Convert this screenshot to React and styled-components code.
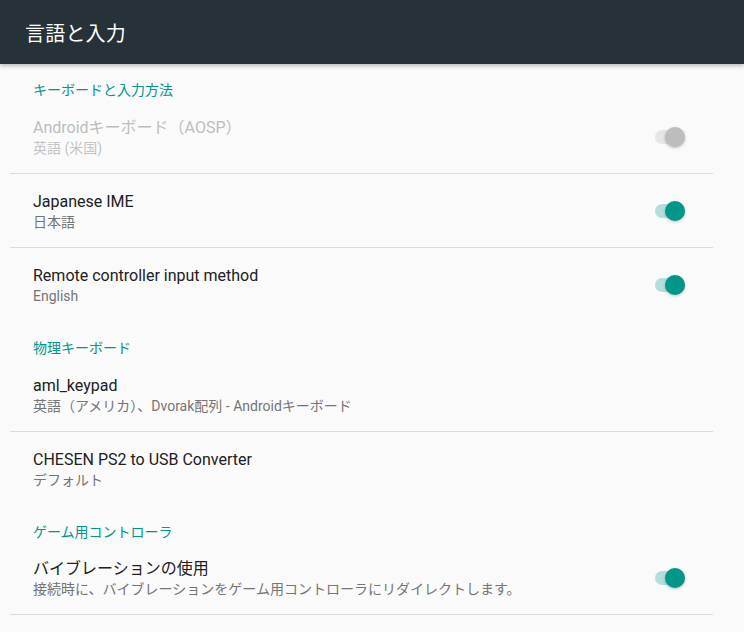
import React from "react";
import styled, { createGlobalStyle } from "styled-components";

const Global = createGlobalStyle`
  html, body { margin: 0; padding: 0; background: #fafafa; }
  body { font-family: Roboto, "Noto Sans CJK JP", sans-serif; -webkit-font-smoothing: antialiased; }
  * { box-sizing: border-box; }
`;

const Page = styled.div`
  width: 744px;
  height: 632px;
  background: #fafafa;
  overflow: hidden;
  position: relative;
`;

const AppBar = styled.header`
  height: 64px;
  background: #263238;
  display: flex;
  align-items: center;
  padding-left: 25px;
  box-shadow: 0 2px 4px rgba(0, 0, 0, 0.25);
  position: relative;
  z-index: 1;
`;

const Title = styled.h1`
  margin: 0;
  font-size: 20px;
  font-weight: 400;
  color: #ffffff;
  letter-spacing: 0.2px;
`;

const List = styled.div`
  display: flex;
  flex-direction: column;
  padding: 0 31px 0 10px;
`;

const Category = styled.div`
  height: ${(p) => (p.$short ? "35px" : "36px")};
  padding: 17px 0 0 23px;
  font-size: 14px;
  line-height: 18px;
  color: #009688;
`;

const Row = styled.div`
  height: 74px;
  display: flex;
  align-items: center;
  padding-left: 23px;
  padding-right: 24px;
  border-bottom: ${(p) => (p.$divider ? "1px solid #dcdcdc" : "1px solid transparent")};
`;

const Texts = styled.div`
  flex: 1;
  display: flex;
  flex-direction: column;
  padding-top: 4px;
`;

const Primary = styled.div`
  font-size: 16px;
  line-height: 20px;
  color: ${(p) => (p.$disabled ? "#bdbdbd" : "#212121")};
`;

const Secondary = styled.div`
  font-size: 14px;
  line-height: 21px;
  color: ${(p) => (p.$disabled ? "#c4c4c4" : "#757575")};
`;

const SwitchWrap = styled.div`
  position: relative;
  width: 34px;
  height: 20px;
  display: flex;
  align-items: center;
  margin-top: 1px;
`;

const Track = styled.div`
  width: 30px;
  height: 14px;
  border-radius: 7px;
  background: ${(p) => (p.$on ? "#b2dfdb" : "#e6e6e6")};
`;

const Thumb = styled.div`
  position: absolute;
  top: 0;
  left: 10px;
  width: 20px;
  height: 20px;
  border-radius: 50%;
  background: ${(p) => (p.$on ? "#009688" : "#bdbdbd")};
  box-shadow: 0 1px 3px rgba(0, 0, 0, 0.25);
`;

const Switch = ({ on }) => (
  <SwitchWrap>
    <Track $on={on} />
    <Thumb $on={on} />
  </SwitchWrap>
);

const Item = ({ title, sub, toggle, on, disabled, divider }) => (
  <Row $divider={divider}>
    <Texts>
      <Primary $disabled={disabled}>{title}</Primary>
      <Secondary $disabled={disabled}>{sub}</Secondary>
    </Texts>
    {toggle && <Switch on={on} />}
  </Row>
);

export default function App() {
  return (
    <Page>
      <Global />
      <AppBar>
        <Title>言語と入力</Title>
      </AppBar>
      <List>
        <Category>キーボードと入力方法</Category>
        <Item title="Androidキーボード（AOSP）" sub="英語 (米国)" toggle on={false} disabled divider />
        <Item title="Japanese IME" sub="日本語" toggle on divider />
        <Item title="Remote controller input method" sub="English" toggle on />
        <Category>物理キーボード</Category>
        <Item title="aml_keypad" sub="英語（アメリカ）、Dvorak配列 - Androidキーボード" divider />
        <Item title="CHESEN PS2 to USB Converter" sub="デフォルト" />
        <Category $short>ゲーム用コントローラ</Category>
        <Item title="バイブレーションの使用" sub="接続時に、バイブレーションをゲーム用コントローラにリダイレクトします。" toggle on divider />
      </List>
    </Page>
  );
}
